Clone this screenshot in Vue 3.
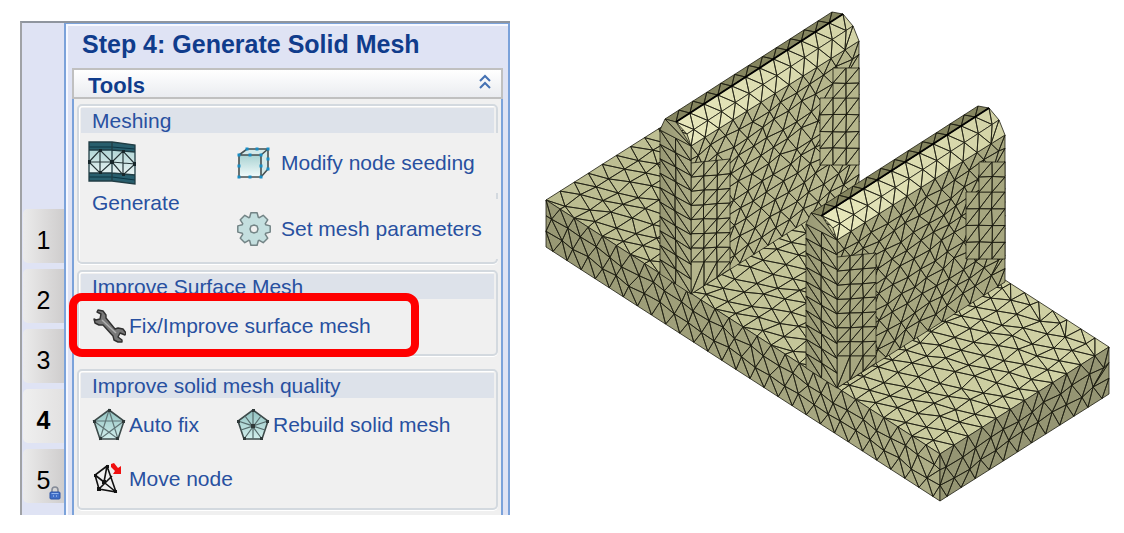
<template>
  <main class="page">
    <div class="wizard">
      <!-- STEP RAIL -->
      <nav class="rail" aria-label="Steps">
        <button
          v-for="step in 5"
          :key="step"
          type="button"
          class="tab"
          :class="{ current: step === current }"
          @click="current = step"
        >
          {{ step }}
          <svg v-if="step === 5" class="lock" viewBox="0 0 12 14" aria-hidden="true">
            <path d="M3 7V4a3 3 0 0 1 6 0v3" fill="none" stroke="#858b98" stroke-width="1.6" />
            <rect x="1" y="6" width="10" height="7" rx="1" fill="#416fc8" stroke="#2c55a7" />
            <path d="M2.5 7.5h7" stroke="#91b4ee" />
            <path d="M4 10h1M7 10h1" stroke="#c4d7f7" />
          </svg>
        </button>
      </nav>

      <!-- STEP PANEL -->
      <section class="panel">
        <h1>Step 4: Generate Solid Mesh</h1>
        <div class="tools">
          <button type="button" class="tools-head" @click="open = !open">
            Tools
            <svg viewBox="0 0 12 16" aria-hidden="true">
              <path d="M1 7l5-5 5 5M1 14l5-5 5 5" fill="none" stroke="#4471b3" stroke-width="2" />
            </svg>
          </button>

          <div v-show="open" class="tools-body">
            <section class="group meshing">
              <h2>Meshing</h2>
              <div class="meshing-row">
                <button type="button" class="generate">
                  <svg viewBox="0 0 48 44" aria-hidden="true">
                    <path d="M1 1h23l23 3v39l-23-3H1z" fill="url(#plate)" />
                    <path d="M1 1h23l23 3v7l-23-2H1zM1 32h23l23 2v9l-23-3H1z" fill="#285e6d" />
                    <path d="M1 6h23l23 2M1 36h23l23 3" fill="none" stroke="#0c3443" />
                    <path d="M1 9h23l23 2M1 32h23l23 2M1 1h23l23 3v39l-23-3H1zM24 1v39" fill="none" stroke="#213d44" stroke-width="1.3" />
                    <path d="M1 21L12 9l12 12-12 11zM24 21l11-11 12 13-12 11zM1 21h23l23 2M12 9v23M35 10v24" fill="none" stroke="#263437" stroke-width="1.2" />
                    <path d="M11 8h3v3h-3zM22 19h4v4h-4zM34 9h3v3h-3zM11 30h3v3h-3zM34 32h3v3h-3zM0 19h3v4H0zM45 21h3v4h-3z" fill="#17262a" />
                  </svg>
                  Generate
                </button>
                <div class="settings">
                  <button type="button">
                    <svg viewBox="0 0 36 36" aria-hidden="true">
                      <path d="M3 10L11 3h21v20l-7 9H3z" fill="#d3e9e9" />
                      <path d="M3 10h22v22H3z" fill="url(#cube)" />
                      <path d="M3 10h22v22H3zM3 10l8-6h21v20l-7 8M25 10l7-6" fill="none" stroke="#455052" stroke-width="1.6" />
                      <path
                        v-for="(p, i) in seeds"
                        :key="i"
                        :d="`M${p[0] - 1.5} ${p[1] - 1.5}h3v3h-3z`"
                        fill="#188dc4"
                      />
                    </svg>
                    Modify node seeding
                  </button>
                  <button type="button">
                    <svg viewBox="0 0 36 36" aria-hidden="true">
                      <path :d="gear" fill="#c4dfdf" stroke="#738486" stroke-width="1.5" stroke-linejoin="round" />
                      <path d="M18 14l3 1 1 3-1 3-3 1-3-1-1-3 1-3z" fill="#f0f0f0" stroke="#738486" stroke-width="1.5" />
                    </svg>
                    Set mesh parameters
                  </button>
                </div>
              </div>
            </section>

            <section class="group surface">
              <h2>Improve Surface Mesh</h2>
              <button type="button" class="tool">
                <svg viewBox="0 0 34 34" aria-hidden="true">
                  <path
                    d="M2 10l1 4 4 2h4l10 11 1 4 4 2h4v-2l-4-3 2-4 5 2 1-2-3-4-5-1-3 1L14 9V6l-3-4-5-1-1 2 4 2-1 5-4 1z"
                    fill="#777"
                    stroke="#303030"
                    stroke-width="1.4"
                    stroke-linejoin="round"
                  />
                  <path d="M10 11l14 13" stroke="#b0b0b0" stroke-width="1.5" />
                </svg>
                Fix/Improve surface mesh
              </button>
              <span class="marker"></span>
            </section>

            <section class="group quality">
              <h2>Improve solid mesh quality</h2>
              <div class="quality-row">
                <button type="button" class="tool">
                  <svg viewBox="0 0 34 34" aria-hidden="true">
                    <path d="M17 2l15 11-6 18H8L2 13z" fill="url(#penta)" stroke="#3d4a4a" stroke-width="1.6" />
                    <path d="M17 2l9 29L2 13h30L8 31z" fill="none" stroke="#607576" stroke-width="1.2" />
                    <path d="M16 1h3v3h-3zM30 12h3v3h-3zM24 29h3v3h-3zM7 29h3v3H7zM1 12h3v3H1z" fill="#2f3939" />
                  </svg>
                  Auto fix
                </button>
                <button type="button" class="tool">
                  <svg viewBox="0 0 34 34" aria-hidden="true">
                    <path d="M17 2l15 11-6 18H8L2 13z" fill="url(#penta)" stroke="#3d4a4a" stroke-width="1.6" />
                    <path d="M17 2v29M2 13l27 9M32 13L5 22M8 31L25 8M26 31L9 8" stroke="#566b6c" stroke-width="1.2" />
                    <path d="M16 1h3v3h-3zM30 12h3v3h-3zM24 29h3v3h-3zM7 29h3v3H7zM1 12h3v3H1zM15 16h4v4h-4z" fill="#2f3939" />
                  </svg>
                  Rebuild solid mesh
                </button>
              </div>
              <button type="button" class="tool">
                <svg viewBox="0 0 34 34" aria-hidden="true">
                  <path d="M15 4L3 13l4 14 17 3zM3 13l21 17M15 4l-3 16M7 27L20 14M12 20l-9-7" fill="none" stroke="#111" stroke-width="1.6" />
                  <path d="M14 3h3v3h-3zM2 12h3v3H2zM5 25h4v4H5zM22 28h3v3h-3zM10 18h4v4h-4z" fill="#111" />
                  <path d="M19 2l3-1 4 5 3-2v8h-8l2-3-4-4z" fill="#f01010" />
                </svg>
                Move node
              </button>
            </section>
          </div>
        </div>
      </section>
    </div>

    <!-- SOLID MODEL -->
    <svg class="model" viewBox="510 0 614 533" role="img" aria-label="Solid mesh">
      <defs>
        <linearGradient id="top"><stop offset="0" stop-color="#babb8f" /><stop offset="1" stop-color="#d2d3a6" /></linearGradient>
        <linearGradient id="fillet"><stop offset="0" stop-color="#e8e8bc" /><stop offset="1" stop-color="#d2d2a6" /></linearGradient>
        <linearGradient id="front"><stop offset="0" stop-color="#989874" /><stop offset="1" stop-color="#adad86" /></linearGradient>
        <linearGradient id="plate" x2="0" y2="1"><stop offset="0" stop-color="#9fcccc" /><stop offset="1" stop-color="#fff" /></linearGradient>
        <linearGradient id="cube" x2="0" y2="1"><stop offset="0" stop-color="#a8d2d2" /><stop offset="1" stop-color="#f2fbfb" /></linearGradient>
        <linearGradient id="penta" x2="0" y2="1"><stop offset="0" stop-color="#91c2c0" /><stop offset="1" stop-color="#d2efed" /></linearGradient>
      </defs>
      <path v-for="(face, i) in faces" :key="i" :d="face.d" :fill="face.fill" class="face" />
      <path d="M676 122L843 14M821 216L989 108" class="ridge" />
    </svg>
  </main>
</template>

<script setup>
import { ref } from 'vue'

const current = ref(4)
const open = ref(true)

const seeds = [
  [3, 10], [14, 10], [25, 10], [3, 21], [25, 21], [3, 32], [14, 32], [25, 32],
  [11, 4], [21, 4], [32, 4], [32, 14], [32, 24]
]

// eight teeth around the centre
const gear = 'M' + Array.from({ length: 8 }, (_, i) =>
  [[-20, 12.5], [-11, 16.5], [11, 16.5], [20, 12.5]].map(([deg, r]) => {
    const a = (i * 45 + deg) * Math.PI / 180
    return `${(18 + r * Math.sin(a)).toFixed(1)} ${(18 - r * Math.cos(a)).toFixed(1)}`
  }).join('L')
).join('L') + 'Z'

let seed = 7
const rand = () => {
  seed = (seed * 16807) % 2147483647
  return seed / 2147483647 - 0.5
}

// point inside the quad a (start), b (end of u), c (opposite), d (end of v)
const at = ([a, b, c, d], u, v) => [0, 1].map(k =>
  (1 - v) * ((1 - u) * a[k] + u * b[k]) + v * ((1 - u) * d[k] + u * c[k])
)

const node = (quad, u, v, jitter) => {
  const p = at(quad, u, v)
  const inside = u > 0 && u < 1 && v > 0 && v < 1
  return inside ? [p[0] + rand() * jitter, p[1] + rand() * jitter] : p
}

const tri = (...pts) => 'M' + pts.map(p => p.map(n => n.toFixed(1)).join(' ')).join('L') + 'Z'

// rows shifted by half a cell, as a free mesher makes them
const free = (fill, quad, nu, nv, jitter = 4, phase = 0) => {
  const rows = []
  for (let j = 0; j <= nv; j++) {
    const us = [0]
    if ((j + phase) % 2) for (let i = 0; i < nu; i++) us.push(i + 0.5)
    else for (let i = 1; i < nu; i++) us.push(i)
    us.push(nu)
    rows.push(us.map(u => ({ u, p: node(quad, u / nu, j / nv, jitter) })))
  }
  let d = ''
  for (let j = 0; j < nv; j++) {
    const [r, s] = [rows[j], rows[j + 1]]
    let a = 0
    let b = 0
    while (a < r.length - 1 || b < s.length - 1) {
      const stepA = b === s.length - 1 || (a < r.length - 1 && r[a + 1].u <= s[b + 1].u)
      if (stepA) {
        d += tri(r[a].p, r[a + 1].p, s[b].p)
        a++
      } else {
        d += tri(r[a].p, s[b + 1].p, s[b].p)
        b++
      }
    }
  }
  return { fill, d }
}

// regular cells, split by one diagonal
const grid = (fill, quad, nu, nv, falling = false, jitter = 1) => {
  const pts = []
  for (let j = 0; j <= nv; j++) {
    pts.push([])
    for (let i = 0; i <= nu; i++) pts[j].push(node(quad, i / nu, j / nv, jitter))
  }
  let d = ''
  for (let j = 0; j < nv; j++) {
    for (let i = 0; i < nu; i++) {
      const [a, b, c, e] = [pts[j][i], pts[j][i + 1], pts[j + 1][i + 1], pts[j + 1][i]]
      d += falling ? tri(a, b, c) + tri(a, c, e) : tri(a, b, e) + tri(b, c, e)
    }
  }
  return { fill, d }
}

const wall = (x, y, side) => {
  const q = (...pts) => pts.map(([px, py]) => [px + x, py + y])
  return [
    // back slope and the two bands of the rounded edge
    grid('#85855f', q([5, -10], [172, -117], [183, -115], [16, -7]), 12, 1),
    free(side, q([31, 17], [199, -88], [199, 59], [31, 165]), 12, 11),
    grid(side, q([31, 34], [70, 30], [70, 133], [31, 133]), 3, 7),
    grid(side, q([31, 133], [70, 133], [70, 140], [31, 165]), 3, 1),
    grid(side, q([160, -31], [199, -31], [199, 36], [160, 36]), 3, 4),
    grid(side, q([173, -61], [199, -61], [199, -31], [173, -31]), 2, 2),
    free('url(#fillet)', q([16, -7], [183, -115], [193, -103], [27, 5]), 12, 1, 0),
    free('url(#fillet)', q([27, 5], [193, -103], [199, -88], [31, 17]), 12, 1, 0, 1),
    grid('url(#front)', q([0, 1], [31, 17], [31, 165], [0, 145]), 2, 10, true),
    grid('url(#front)', q([0, 1], [5, -10], [16, -7], [31, 17]), 1, 1)
  ]
}

const faces = [
  free('url(#top)', [[546, 200], [715, 93], [1109, 347], [940, 454]], 12, 28),
  free('url(#front)', [[546, 200], [940, 454], [940, 501], [546, 247]], 28, 3),
  free('#959573', [[940, 454], [1109, 347], [1109, 394], [940, 501]], 12, 3),
  ...wall(660, 129, '#b5b58c'),
  ...wall(806, 223, '#a7a780')
]
</script>

<style>
body {
  margin: 0;
  background: #fff;
}
</style>

<style scoped>
.page {
  display: grid;
  grid-template-columns: minmax(0, 490fr) minmax(0, 614fr);
  align-items: start;
  padding-left: 20px;
  font-family: "Liberation Sans", Arial, sans-serif;
  font-size: 21px;
  color: #2850a0;
}

button {
  display: flex;
  align-items: center;
  padding: 0;
  border: 0;
  background: none;
  font: inherit;
  color: inherit;
  text-align: left;
  white-space: nowrap;
  cursor: pointer;
}

svg {
  display: block;
  flex: none;
}

h1,
h2 {
  margin: 0;
  white-space: nowrap;
}

.wizard {
  display: flex;
  box-sizing: border-box;
  margin-top: 21px;
  border-top: 2px solid #8f959e;
  border-left: 2px solid #a0a2a6;
  background: #dfe3f4;
}

/* RAIL */
.rail {
  display: flex;
  flex-direction: column;
  gap: 6px;
  flex: none;
  width: 42px;
  padding-top: 186px;
}

.tab {
  position: relative;
  justify-content: center;
  height: 54px;
  margin-left: 1px;
  padding-top: 8px;
  border-radius: 5px 0 0 5px;
  background: linear-gradient(90deg, #ebebeb, #cfcdcd);
  font-size: 25px;
  color: #000;
}

.tab.current {
  font-weight: bold;
  background: linear-gradient(90deg, #efefef, #e2e1e1);
}

.lock {
  position: absolute;
  right: 3px;
  bottom: 3px;
  width: 12px;
  height: 14px;
}

/* PANEL */
.panel {
  flex: 1;
  min-width: 0;
  padding: 0 5px 0 6px;
  border: 2px solid #7ba2da;
  border-top-width: 1px;
  border-bottom: 0;
  box-shadow: inset 2px 2px #f6f8ff;
}

h1 {
  padding: 0 0 4px 10px;
  font-size: 25px;
  line-height: 40px;
  color: #103c8c;
}

.tools-head {
  justify-content: space-between;
  box-sizing: border-box;
  width: 100%;
  height: 31px;
  padding: 4px 10px 0 14px;
  border: 2px solid #c0c0c0;
  background: linear-gradient(#fff, #eaecf0);
  font-size: 22px;
  font-weight: bold;
  color: #103c8c;
}

.tools-head svg {
  width: 12px;
  height: 16px;
  margin-bottom: 8px;
}

.tools-body {
  display: flex;
  flex-direction: column;
  gap: 6px;
  padding: 5px 3px;
  border: solid #7ba2da;
  border-width: 0 2px;
  background: #f0f0f0;
}

.group {
  position: relative;
  box-sizing: border-box;
  border: 2px solid #d3d9df;
  border-radius: 5px;
  box-shadow: inset 1px 1px #fff, 0 1px #fff;
}

h2 {
  margin: 2px 2px 0;
  padding-left: 11px;
  background: #dde2ea;
  font-size: 21px;
  font-weight: normal;
  line-height: 25px;
}

.meshing {
  min-height: 160px;
}

.meshing-row {
  display: flex;
}

.generate {
  flex-direction: column;
  align-items: flex-start;
  gap: 6px;
  width: 157px;
  padding: 8px 0 0 13px;
}

.generate svg {
  width: 48px;
  height: 44px;
  margin-left: -4px;
}

.settings {
  display: flex;
  flex: 1;
  flex-direction: column;
  gap: 6px;
}

.settings button {
  gap: 9px;
  height: 60px;
  margin-right: -2px;
  background: #f0f0f0;
}

.settings svg {
  width: 36px;
  height: 36px;
}

.tool {
  gap: 3px;
  height: 54px;
  padding-left: 13px;
}

.tool svg {
  width: 34px;
  height: 34px;
}

.surface {
  min-height: 86px;
}

.marker {
  position: absolute;
  top: 21px;
  left: -10px;
  box-sizing: border-box;
  width: 350px;
  height: 64px;
  border: 8px solid #f00;
  border-radius: 13px;
  pointer-events: none;
}

.quality {
  min-height: 141px;
  margin-top: 7px;
}

.quality-row {
  display: flex;
}

.quality-row .tool {
  flex: 0 0 144px;
}

.quality-row .tool + .tool {
  flex: 1;
}

/* MODEL */
.model {
  width: 100%;
  height: auto;
}

.face {
  stroke: #1c1c10;
  stroke-width: 0.8;
  stroke-linejoin: round;
}

.ridge {
  fill: none;
  stroke: #000;
  stroke-width: 2;
}
</style>
